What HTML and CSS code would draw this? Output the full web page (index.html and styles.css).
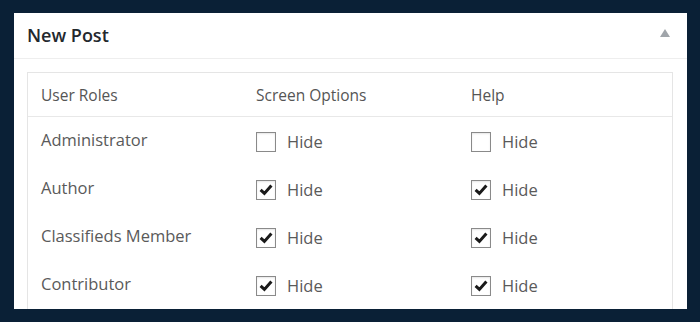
FILE: index.html
```html
<!DOCTYPE html>
<html>
<head>
<meta charset="utf-8">
<link rel="stylesheet" href="styles.css">
</head>
<body>
<div class="panel">
  <div class="panel-head">
    <h2 class="panel-title">New Post</h2>
    <span class="toggle"></span>
  </div>
  <div class="roles">
    <div class="row head">
      <div class="cell">User Roles</div>
      <div class="cell">Screen Options</div>
      <div class="cell">Help</div>
    </div>
    <div class="row">
      <div class="cell label">Administrator</div>
      <label class="cell opt"><span class="box"></span>Hide</label>
      <label class="cell opt"><span class="box"></span>Hide</label>
    </div>
    <div class="row">
      <div class="cell label">Author</div>
      <label class="cell opt"><span class="box checked"><svg viewBox="0 0 20 20"><polyline points="4.6,9.8 8.4,13.4 15.4,5.4"/></svg></span>Hide</label>
      <label class="cell opt"><span class="box checked"><svg viewBox="0 0 20 20"><polyline points="4.6,9.8 8.4,13.4 15.4,5.4"/></svg></span>Hide</label>
    </div>
    <div class="row">
      <div class="cell label">Classifieds Member</div>
      <label class="cell opt"><span class="box checked"><svg viewBox="0 0 20 20"><polyline points="4.6,9.8 8.4,13.4 15.4,5.4"/></svg></span>Hide</label>
      <label class="cell opt"><span class="box checked"><svg viewBox="0 0 20 20"><polyline points="4.6,9.8 8.4,13.4 15.4,5.4"/></svg></span>Hide</label>
    </div>
    <div class="row">
      <div class="cell label">Contributor</div>
      <label class="cell opt"><span class="box checked"><svg viewBox="0 0 20 20"><polyline points="4.6,9.8 8.4,13.4 15.4,5.4"/></svg></span>Hide</label>
      <label class="cell opt"><span class="box checked"><svg viewBox="0 0 20 20"><polyline points="4.6,9.8 8.4,13.4 15.4,5.4"/></svg></span>Hide</label>
    </div>
  </div>
</div>
</body>
</html>
```

FILE: styles.css
```css
html, body {
  margin: 0;
  padding: 0;
  background: #0a2036;
  font-family: "Open Sans", "Liberation Sans", sans-serif;
}
body {
  width: 700px;
  height: 322px;
  overflow: hidden;
  padding-top: 13px;
  box-sizing: border-box;
}
.panel {
  margin-left: 14px;
  width: 673px;
  height: 296px;
  background: #fff;
  overflow: hidden;
  box-sizing: border-box;
}
.panel-head {
  height: 45px;
  border-bottom: 1px solid #eeeeee;
  display: flex;
  align-items: center;
  justify-content: space-between;
  padding: 0 17px 0 13px;
}
.panel-title {
  margin: 0;
  font-size: 18px;
  font-weight: 600;
  color: #23282d;
  line-height: 24px;
  margin-top: -2px;
}
.toggle {
  width: 0;
  height: 0;
  border-left: 5px solid transparent;
  border-right: 5px solid transparent;
  border-bottom: 8px solid #a0a5aa;
  margin-top: -5px;
}
.roles {
  margin: 13px 14px 0 13px;
  border: 1px solid #e5e5e5;
  border-bottom: none;
  height: 240px;
}
.row {
  display: grid;
  grid-template-columns: 215px 215px 1fr;
  padding-left: 13px;
  height: 48px;
  color: #5a5a5a;
  font-size: 16.5px;
}
.row.head {
  height: 43px;
  border-bottom: 1px solid #e8e8e8;
  font-size: 15.5px;
  align-items: center;
  color: #555;
}
.label {
  padding-top: 12px;
  line-height: 22px;
}
.opt {
  display: flex;
  align-items: center;
  gap: 11px;
  height: 20px;
  margin-top: 15px;
  line-height: 22px;
}
.box {
  width: 20px;
  height: 20px;
  box-sizing: border-box;
  border: 1px solid #8a8a8a;
  background: #fff;
  box-shadow: inset 0 1px 2px rgba(0,0,0,0.1);
  display: flex;
  align-items: center;
  justify-content: center;
}
.box svg {
  width: 20px;
  height: 20px;
  flex: none;
  fill: none;
  stroke: #1a1a1a;
  stroke-width: 3;
  stroke-linejoin: miter;
  stroke-linecap: butt;
}
```
